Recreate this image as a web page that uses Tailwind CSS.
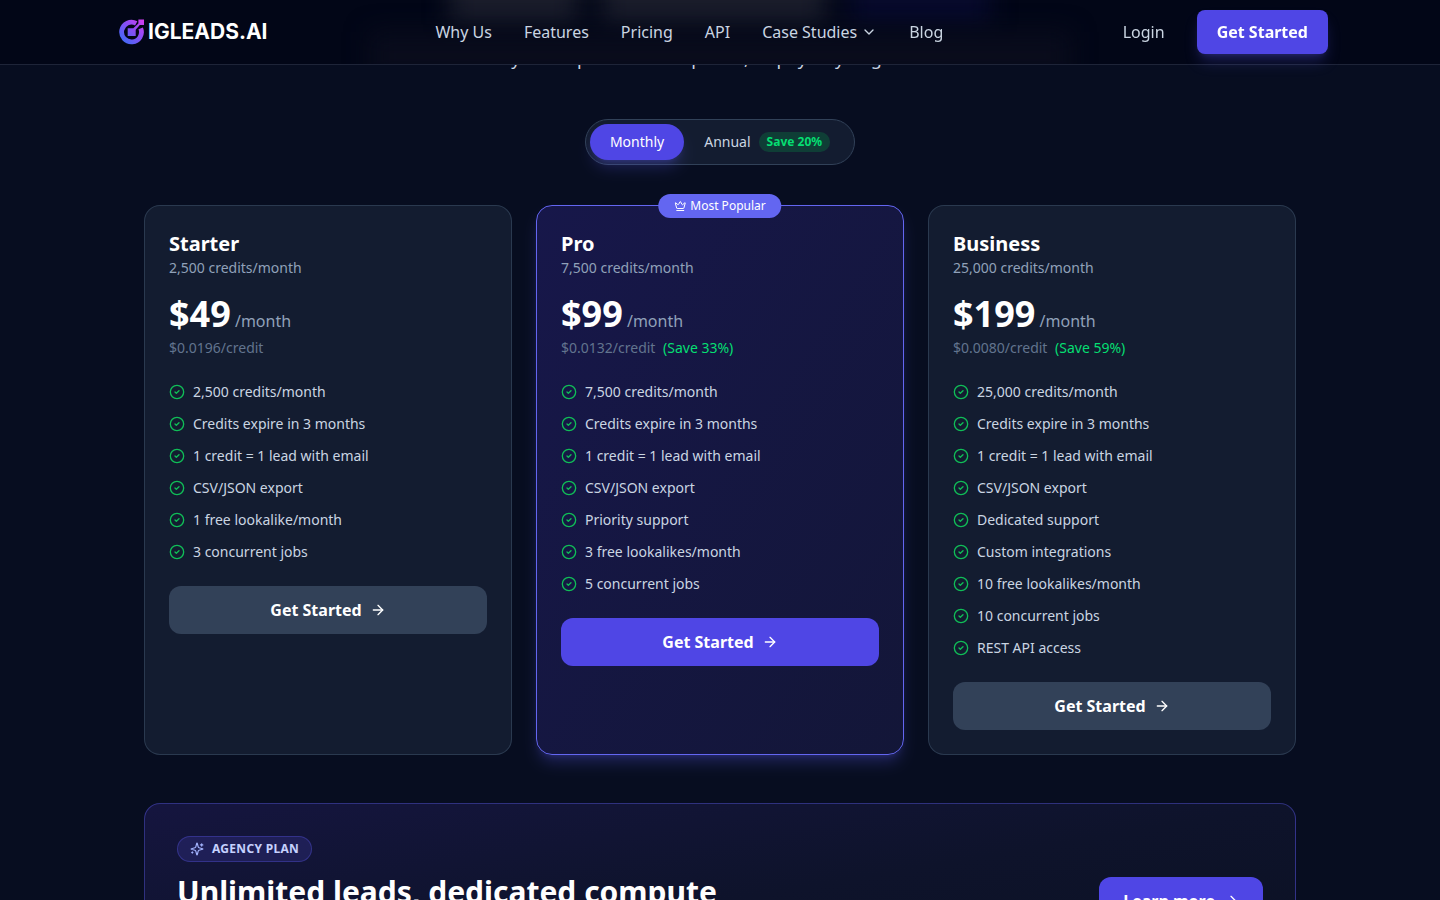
<!DOCTYPE html>
<html lang="en">
<head>
    <meta charset="UTF-8"/>
    <meta name="viewport" content="width=device-width, initial-scale=1.0"/>
    <title>IGLeads.ai - Pricing</title>
    <script src="https://cdn.jsdelivr.net/npm/@tailwindcss/browser@4"></script>
</head>
<body class="bg-[#070d20] font-['Noto_Sans',sans-serif] text-white min-h-screen overflow-x-hidden">

<!-- Shared icons -->
<svg class="hidden" aria-hidden="true">
    <symbol id="icon-check" viewBox="0 0 24 24" fill="none" stroke="currentColor" stroke-width="2" stroke-linecap="round" stroke-linejoin="round">
        <circle cx="12" cy="12" r="10"/>
        <path d="m9 12 2 2 4-4"/>
    </symbol>
    <symbol id="icon-arrow" viewBox="0 0 24 24" fill="none" stroke="currentColor" stroke-width="2" stroke-linecap="round" stroke-linejoin="round">
        <path d="M5 12h14"/>
        <path d="m12 5 7 7-7 7"/>
    </symbol>
</svg>

<header class="fixed inset-x-0 top-0 z-50 bg-[#020617] border-b border-[#1e2438]">
    <!-- Soft glow behind the menu -->
    <div class="absolute inset-0 overflow-hidden" aria-hidden="true">
        <div class="absolute -top-8 left-1/2 -translate-x-1/2 w-[540px] h-14 flex gap-6 blur-md">
            <div class="w-32 bg-[#1a1d2b]"></div>
            <div class="w-56 bg-[#1a1d2b]"></div>
            <div class="flex-1 bg-[#070a2c]"></div>
        </div>
        <div class="absolute top-8 left-1/2 -translate-x-1/2 w-[700px] h-12 bg-[#090c1c] blur-md"></div>
    </div>
    <div class="relative max-w-7xl mx-auto px-8 h-16 flex items-center justify-between">
        <a href="#" class="flex items-center gap-[3px] w-40 pl-[7px]">
            <svg class="w-[26px] h-[26px] shrink-0" viewBox="0 0 26 26" fill="none" aria-hidden="true">
                <defs>
                    <linearGradient id="logo" x1="3" y1="24" x2="25" y2="1" gradientUnits="userSpaceOnUse">
                        <stop stop-color="#3b6cf6"/>
                        <stop offset="0.55" stop-color="#8b4df5"/>
                        <stop offset="1" stop-color="#d63df0"/>
                    </linearGradient>
                </defs>
                <path d="M17.2 4.3A9.9 9.9 0 1 0 21.7 9.3" stroke="url(#logo)" stroke-width="4.8"/>
                <path d="M8.7 9.3h5.6L19.4 4.6V.5H25v5.4h-4.2l-4.1 4.8V17h-8z" fill="url(#logo)"/>
            </svg>
            <span class="font-['Inter',sans-serif] font-bold text-[21px] leading-8">IGLEADS.AI</span>
        </a>
        <nav class="flex items-center gap-8 text-slate-300">
            <a href="#" class="hover:text-white">Why Us</a>
            <a href="#" class="hover:text-white">Features</a>
            <a href="#" class="hover:text-white">Pricing</a>
            <a href="#" class="hover:text-white">API</a>
            <button type="button" class="flex items-center gap-1 hover:text-white">
                Case Studies
                <svg class="w-4 h-4" viewBox="0 0 24 24" fill="none" stroke="currentColor" stroke-width="2" stroke-linecap="round" stroke-linejoin="round" aria-hidden="true"><path d="m6 9 6 6 6-6"/></svg>
            </button>
            <a href="#" class="hover:text-white">Blog</a>
        </nav>
        <div class="flex items-center gap-4">
            <a href="#" class="px-4 py-2 text-slate-300 hover:text-white">Login</a>
            <a href="#" class="px-5 py-[10px] rounded-lg bg-[#4f46e5] font-bold shadow-lg shadow-indigo-500/25 hover:bg-indigo-500">Get Started</a>
        </div>
    </div>
</header>

<main class="max-w-6xl mx-auto pt-11 pb-16">
    <p class="text-lg text-slate-300 text-center mb-12">Start small and you keep at no cost upfront, or pay as you go until the work ends</p>

    <!-- Billing period -->
    <div class="flex justify-center -mt-px mb-10">
        <div class="flex items-center p-1 rounded-full border border-slate-700 bg-[#131c30] text-sm">
            <button type="button" class="px-5 py-2 rounded-full bg-[#4f46e5] shadow-lg shadow-indigo-500/25">Monthly</button>
            <button type="button" class="px-5 py-2 rounded-full flex items-center gap-2 text-slate-300 hover:text-white">
                Annual
                <span class="px-2 py-0.5 -my-0.5 rounded-full bg-green-500/20 text-green-400 text-xs font-bold">Save 20%</span>
            </button>
        </div>
    </div>

    <div class="grid grid-cols-3 gap-6">
        <section class="rounded-2xl border border-slate-700/80 bg-[#131c30] p-6">
            <h2 class="text-xl font-bold">Starter</h2>
            <p class="text-sm text-slate-400">2,500 credits/month</p>
            <p class="mt-4 text-slate-400"><span class="text-4xl font-bold text-white">$49</span> /month</p>
            <p class="mt-1 text-sm text-slate-500">$0.0196/credit</p>
            <ul class="mt-6 space-y-3 text-sm text-slate-300">
                <li class="flex items-center gap-2"><svg class="w-4 h-4 text-[#10bd57]"><use href="#icon-check"/></svg>2,500 credits/month</li>
                <li class="flex items-center gap-2"><svg class="w-4 h-4 text-[#10bd57]"><use href="#icon-check"/></svg>Credits expire in 3 months</li>
                <li class="flex items-center gap-2"><svg class="w-4 h-4 text-[#10bd57]"><use href="#icon-check"/></svg>1 credit = 1 lead with email</li>
                <li class="flex items-center gap-2"><svg class="w-4 h-4 text-[#10bd57]"><use href="#icon-check"/></svg>CSV/JSON export</li>
                <li class="flex items-center gap-2"><svg class="w-4 h-4 text-[#10bd57]"><use href="#icon-check"/></svg>1 free lookalike/month</li>
                <li class="flex items-center gap-2"><svg class="w-4 h-4 text-[#10bd57]"><use href="#icon-check"/></svg>3 concurrent jobs</li>
            </ul>
            <button type="button" class="mt-6 w-full py-3 rounded-xl bg-[#324158] font-bold flex items-center justify-center gap-2 hover:bg-slate-600">Get Started <svg class="w-4 h-4"><use href="#icon-arrow"/></svg></button>
        </section>

        <section class="relative rounded-2xl border border-[#6366f1] bg-linear-to-br from-[#17174a] to-[#131638] p-6 shadow-lg shadow-indigo-500/25">
            <span class="absolute -top-3 left-1/2 -translate-x-1/2 flex items-center gap-1 px-4 py-1 rounded-full bg-[#6366f1] text-xs whitespace-nowrap">
                <svg class="w-3 h-3" viewBox="0 0 24 24" fill="none" stroke="currentColor" stroke-width="2" stroke-linecap="round" stroke-linejoin="round" aria-hidden="true">
                    <path d="M11.562 3.266a.5.5 0 0 1 .876 0L15.39 8.87a1 1 0 0 0 1.516.294L21.183 5.5a.5.5 0 0 1 .798.519l-2.834 10.246a1 1 0 0 1-.956.734H5.81a1 1 0 0 1-.957-.734L2.02 6.02a.5.5 0 0 1 .798-.519l4.276 3.664a1 1 0 0 0 1.516-.294z"/>
                    <path d="M5 21h14"/>
                </svg>
                Most Popular
            </span>
            <h2 class="text-xl font-bold">Pro</h2>
            <p class="text-sm text-slate-400">7,500 credits/month</p>
            <p class="mt-4 text-slate-400"><span class="text-4xl font-bold text-white">$99</span> /month</p>
            <p class="mt-1 text-sm text-slate-500">$0.0132/credit <span class="ml-1 text-green-400">(Save 33%)</span></p>
            <ul class="mt-6 space-y-3 text-sm text-slate-300">
                <li class="flex items-center gap-2"><svg class="w-4 h-4 text-[#10bd57]"><use href="#icon-check"/></svg>7,500 credits/month</li>
                <li class="flex items-center gap-2"><svg class="w-4 h-4 text-[#10bd57]"><use href="#icon-check"/></svg>Credits expire in 3 months</li>
                <li class="flex items-center gap-2"><svg class="w-4 h-4 text-[#10bd57]"><use href="#icon-check"/></svg>1 credit = 1 lead with email</li>
                <li class="flex items-center gap-2"><svg class="w-4 h-4 text-[#10bd57]"><use href="#icon-check"/></svg>CSV/JSON export</li>
                <li class="flex items-center gap-2"><svg class="w-4 h-4 text-[#10bd57]"><use href="#icon-check"/></svg>Priority support</li>
                <li class="flex items-center gap-2"><svg class="w-4 h-4 text-[#10bd57]"><use href="#icon-check"/></svg>3 free lookalikes/month</li>
                <li class="flex items-center gap-2"><svg class="w-4 h-4 text-[#10bd57]"><use href="#icon-check"/></svg>5 concurrent jobs</li>
            </ul>
            <button type="button" class="mt-6 w-full py-3 rounded-xl bg-[#4f46e5] font-bold flex items-center justify-center gap-2 hover:bg-indigo-500">Get Started <svg class="w-4 h-4"><use href="#icon-arrow"/></svg></button>
        </section>

        <section class="rounded-2xl border border-slate-700/80 bg-[#131c30] p-6">
            <h2 class="text-xl font-bold">Business</h2>
            <p class="text-sm text-slate-400">25,000 credits/month</p>
            <p class="mt-4 text-slate-400"><span class="text-4xl font-bold text-white">$199</span> /month</p>
            <p class="mt-1 text-sm text-slate-500">$0.0080/credit <span class="ml-1 text-green-400">(Save 59%)</span></p>
            <ul class="mt-6 space-y-3 text-sm text-slate-300">
                <li class="flex items-center gap-2"><svg class="w-4 h-4 text-[#10bd57]"><use href="#icon-check"/></svg>25,000 credits/month</li>
                <li class="flex items-center gap-2"><svg class="w-4 h-4 text-[#10bd57]"><use href="#icon-check"/></svg>Credits expire in 3 months</li>
                <li class="flex items-center gap-2"><svg class="w-4 h-4 text-[#10bd57]"><use href="#icon-check"/></svg>1 credit = 1 lead with email</li>
                <li class="flex items-center gap-2"><svg class="w-4 h-4 text-[#10bd57]"><use href="#icon-check"/></svg>CSV/JSON export</li>
                <li class="flex items-center gap-2"><svg class="w-4 h-4 text-[#10bd57]"><use href="#icon-check"/></svg>Dedicated support</li>
                <li class="flex items-center gap-2"><svg class="w-4 h-4 text-[#10bd57]"><use href="#icon-check"/></svg>Custom integrations</li>
                <li class="flex items-center gap-2"><svg class="w-4 h-4 text-[#10bd57]"><use href="#icon-check"/></svg>10 free lookalikes/month</li>
                <li class="flex items-center gap-2"><svg class="w-4 h-4 text-[#10bd57]"><use href="#icon-check"/></svg>10 concurrent jobs</li>
                <li class="flex items-center gap-2"><svg class="w-4 h-4 text-[#10bd57]"><use href="#icon-check"/></svg>REST API access</li>
            </ul>
            <button type="button" class="mt-6 w-full py-3 rounded-xl bg-[#324158] font-bold flex items-center justify-center gap-2 hover:bg-slate-600">Get Started <svg class="w-4 h-4"><use href="#icon-arrow"/></svg></button>
        </section>
    </div>

    <!-- Agency plan -->
    <section class="mt-12 rounded-2xl border border-indigo-500/40 bg-linear-to-br from-[#15153f] via-[#0e132b] to-[#0b1122] p-8 flex items-center justify-between gap-8">
        <div>
            <span class="inline-flex items-center gap-2 px-3 py-1 rounded-full border border-indigo-500/30 bg-indigo-500/15 text-indigo-200 text-xs font-bold tracking-wide uppercase align-top">
                <svg class="w-[14px] h-[14px] text-indigo-300" viewBox="0 0 24 24" fill="none" stroke="currentColor" stroke-width="2" stroke-linecap="round" stroke-linejoin="round" aria-hidden="true">
                    <path d="M9.937 15.5A2 2 0 0 0 8.5 14.063l-6.135-1.582a.5.5 0 0 1 0-.962L8.5 9.936A2 2 0 0 0 9.937 8.5l1.582-6.135a.5.5 0 0 1 .963 0L14.063 8.5A2 2 0 0 0 15.5 9.937l6.135 1.581a.5.5 0 0 1 0 .964L15.5 14.063a2 2 0 0 0-1.437 1.437l-1.582 6.135a.5.5 0 0 1-.963 0z"/>
                    <path d="M20 3v4"/>
                    <path d="M22 5h-4"/>
                    <path d="M4 17v2"/>
                    <path d="M5 18H3"/>
                </svg>
                Agency plan
            </span>
            <h2 class="mt-3 text-3xl font-bold">Unlimited leads, dedicated compute</h2>
            <p class="mt-2 max-w-2xl text-slate-300">Built for agencies and teams that run lead generation around the clock, with reserved capacity and a dedicated account manager.</p>
        </div>
        <a href="#" class="shrink-0 px-6 py-3 rounded-xl bg-[#4f46e5] font-bold flex items-center gap-2 hover:bg-indigo-500">Learn more <svg class="w-4 h-4"><use href="#icon-arrow"/></svg></a>
    </section>
</main>
</body>
</html>
